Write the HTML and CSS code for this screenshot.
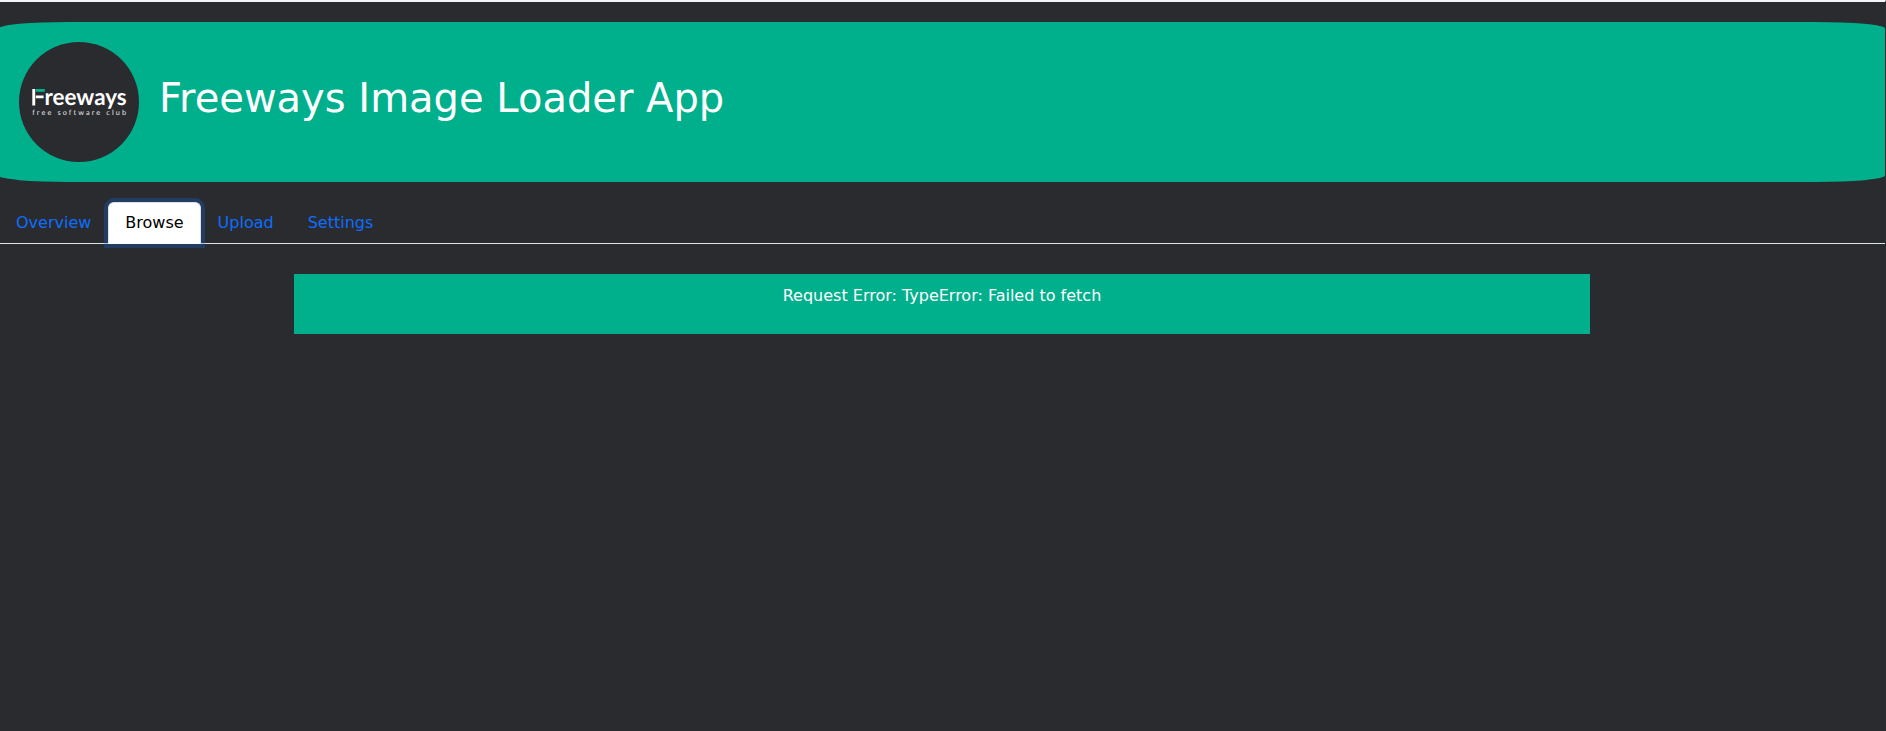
FILE: index.html
```
<!DOCTYPE html>
<html lang="en">
<head>
<meta charset="utf-8">
<title>Freeways Image Loader App</title>
<link rel="stylesheet" href="styles.css">
</head>
<body>
<div class="page">
  <header class="banner">
    <svg class="logo" width="120" height="120" viewBox="0 0 120 120">
      <circle cx="60" cy="60" r="60" fill="#2a2b2f"/>
      <path d="M13.3 47h2.9v16.4h-2.9z M16.8 53.6h7.8v2.6h-7.8z" fill="#fff"/>
      <path d="M16.8 47h9v2.8h-9z" fill="#00b08c"/>
      <text class="logo-name" x="25.6" y="63.4" textLength="82" lengthAdjust="spacingAndGlyphs">reeways</text>
      <text class="logo-sub" x="13.2" y="73" textLength="93.8">free software club</text>
    </svg>
    <h1 class="title">Freeways Image Loader App</h1>
  </header>
  <nav class="tabs">
    <a class="tab">Overview</a>
    <a class="tab active">Browse</a>
    <a class="tab">Upload</a>
    <a class="tab">Settings</a>
  </nav>
  <main class="message">Request Error: TypeError: Failed to fetch</main>
</div>
</body>
</html>
```
FILE: styles.css
```
* { box-sizing: border-box; }
html { background: #2a2b2f; overflow: hidden; }
body {
  margin: 0;
  height: 731px;
  overflow: hidden;
  border-top: 2px solid #f3f4fa;
  border-right: 1px solid #2a2e33;
  font: 16px/24px "DejaVu Sans", sans-serif;
  color: #fff;
}
.page { width: 1886px; margin-left: -1px; padding-top: 20px; }
.banner {
  display: flex;
  height: 160px;
  padding: 20px;
  border-radius: 70px / 6.4px;
  background: #00b08c;
}
.logo { flex: none; margin-right: 20px; }
.logo-name { font: 700 23px Lato, sans-serif; fill: #fff; text-rendering: geometricPrecision; }
.logo-sub { font: 400 7.3px Lato, sans-serif; font-variant-ligatures: none; fill: #e4e4e5; text-rendering: geometricPrecision; }
.title { margin: 32px 0 0; font-size: 40px; font-weight: 400; line-height: 48px; white-space: nowrap; }
.tabs { display: flex; margin-top: 20px; border-bottom: 1px solid #dee2e6; }
.tab {
  margin-bottom: -1px;
  padding: 8px 16px;
  border: 1px solid transparent;
  border-radius: 6px 6px 0 0;
  color: #0d6efd;
}
.active {
  color: #000;
  background: #fff;
  border-color: #dee2e6 #dee2e6 #fff;
  box-shadow: 0 0 0 4px rgba(13, 110, 253, .25);
}
.message {
  width: 1296px;
  height: 60px;
  margin: 30px auto 0;
  padding-top: 10px;
  text-align: center;
  background: #00b08c;
}
```
